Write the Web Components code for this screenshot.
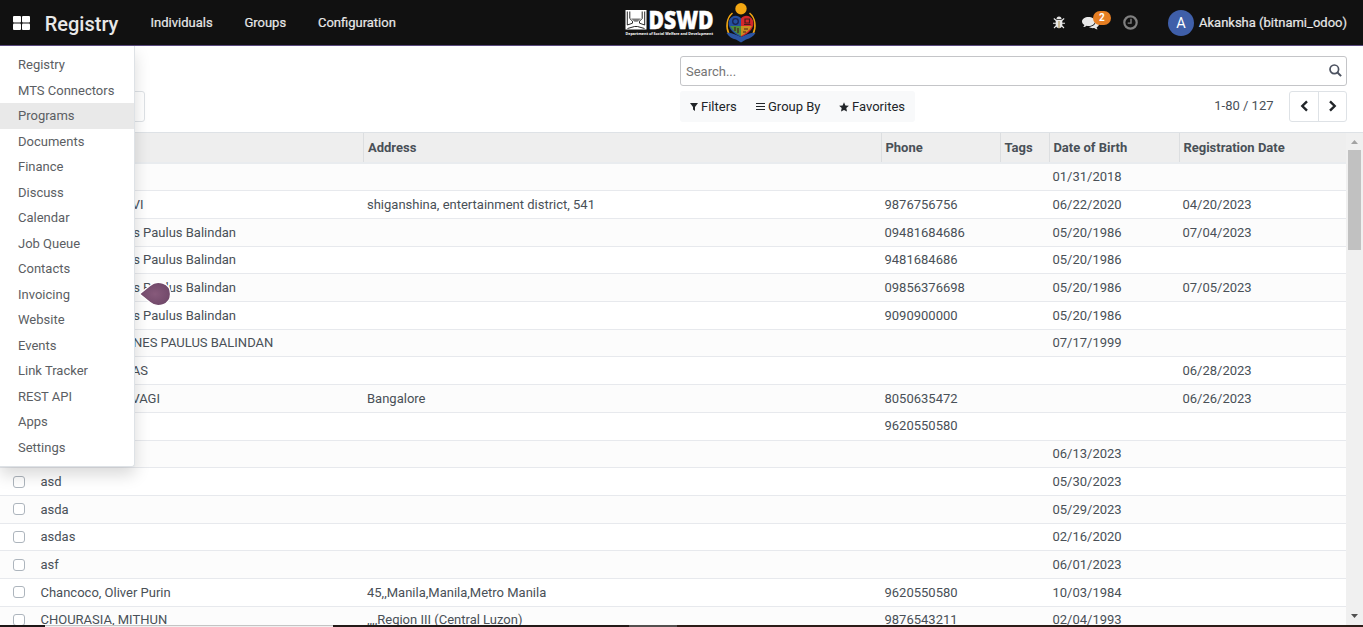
<!DOCTYPE html>
<html lang="en">
<head>
<meta charset="utf-8">
<title>Registry</title>
<style>
html,body{margin:0;height:100%;overflow:hidden;background:#fff}
body{font-family:Roboto,"Liberation Sans",sans-serif;font-size:13px;line-height:19.5px;color:#495057}
</style>
</head>
<body>
<registry-app></registry-app>
<script>
const define=(name,html,init)=>customElements.define(name,class extends HTMLElement{
  connectedCallback(){
    if(this.shadowRoot)return;
    const root=this.attachShadow({mode:"open"});
    const t=document.createElement("template");
    t.innerHTML=typeof html==="function"?html(this):html;
    root.append(t.content.cloneNode(true));
    if(init)init(this,root);
  }
});

define("dswd-logo",`
<style>
:host{display:flex;align-items:center}
svg{display:block}
</style>
<svg width="134" height="45" viewBox="0 0 134 45" aria-label="DSWD">
  <rect x="0.500" y="10" width="21" height="19.500" fill="#fff"/>
  <path d="M2.300 11.500v13.500l5.200-1.800v-2L4.800 18.500v-7M19.700 11.500v13.500l-5.200-1.800v-2l2.700-2.700v-7" fill="none" stroke="#111" stroke-width=".9"/>
  <path d="M6 18.500h10l-3.500 3.200h-3z" fill="#111" opacity=".55"/>
  <path d="M2.500 28.500l7-2h3l7 2" fill="none" stroke="#111" stroke-width=".9"/>
  <text x="23.500" y="28.500" textLength="65" lengthAdjust="spacingAndGlyphs" font-family="Open Sans" font-weight="800" font-size="24.500" fill="#fff" stroke="#fff" stroke-width=".5">DSWD</text>
  <text x="0.500" y="35" textLength="87.500" lengthAdjust="spacingAndGlyphs" font-family="Open Sans" font-weight="700" font-size="4" fill="#fff">Department of Social Welfare and Development</text>
  <g>
    <path d="M107.500 13c-6 5-7 14-3.500 21M124.500 13c6 5 7 14 3.500 21" fill="none" stroke="#f3a712" stroke-width="1.500"/>
    <path d="M116 37c-9-4-14-10-12-16.500 2-5.500 9-6.500 12-2z" fill="#244f9e"/>
    <path d="M116 37c9-4 14-10 12-16.500-2-5.500-9-6.500-12-2z" fill="#d3262b"/>
    <path d="M105 26H116v10c-5-3-9-6-11-10z" fill="#4b8b3b"/>
    <path d="M127 26H116v10c5-3 9-6 11-10z" fill="#c8901f"/>
    <circle cx="110.500" cy="21.500" r="2.800" fill="none" stroke="#1b2350" stroke-width="1.300"/>
    <path d="M119 24.500h6.500M120 23v-4h4.500v4zM110 27v4M113 28v5M119 29h4M118 32h3" fill="none" stroke="#4a1a1c" stroke-width="1.200"/>
    <path d="M101.500 33c5-1 9 2 14.500 4 5.500-2 9-5 14.500-4-2 3-5 5.500-9.500 6.500l-5 3-5-3c-4-.5-7-3-9.500-6.500z" fill="#2c55a3"/>
    <circle cx="116" cy="8.800" r="5.700" fill="#f3a712"/>
  </g>
</svg>`);

define("nav-link",`<style>:host{display:block;font-size:13px;color:#e8e8e8;-webkit-text-stroke:.2px #e8e8e8;white-space:nowrap}</style><slot></slot>`);

define("top-bar",`
<style>
:host{display:grid;grid-template-columns:625px 134px 1fr;height:45px;background:#111;border-bottom:1px solid #5a4a7e;color:#e8e8e8}
.left{display:flex;align-items:center}
.grid{width:17px;height:14px;margin-left:13px;margin-top:1px}
.brand{font-size:20px;font-weight:500;margin:3px 31.800px 0 14.700px;width:74px;white-space:nowrap;line-height:30px}
nav{display:flex;gap:31.800px}
.right{display:flex;align-items:center;justify-content:flex-end;padding-right:16px}
.msg{position:relative;width:18px;height:16px;margin:0 23px 0 17px}
.badge{position:absolute;left:11px;top:-4px;width:18px;height:14px;border-radius:7px;background:#e67e22;color:#fff;font-size:10px;line-height:14px;font-weight:700;text-align:center}
.avatar{width:26px;height:26px;border-radius:50%;background:#3f5fa9;color:#fff;font-size:14.500px;line-height:27px;text-align:center;margin:0 5px 0 30px}
svg{display:block;flex:none}
</style>
<div class="left">
  <svg class="grid" viewBox="0 0 17 14" fill="#fff"><rect width="8" height="6.500" rx="1"/><rect x="9" width="8" height="6.500" rx="1"/><rect y="7.500" width="8" height="6.500" rx="1"/><rect x="9" y="7.500" width="8" height="6.500" rx="1"/></svg>
  <span class="brand">Registry</span>
  <nav><nav-link>Individuals</nav-link><nav-link>Groups</nav-link><nav-link>Configuration</nav-link></nav>
</div>
<dswd-logo></dswd-logo>
<div class="right">
  <svg width="12" height="13" viewBox="0 0 12 13"><path d="M3.500 3a2.500 2.500 0 0 1 5 0z" fill="#e8e8e8"/><path d="M2.700 3.700h6.600v5c0 2-1.500 3.500-3.300 3.500s-3.300-1.500-3.300-3.500z" fill="#e8e8e8"/><path d="M.8 2.500l2.500 2M11.200 2.500l-2.500 2M0 7.300h12M1 12l2.500-2.500M11 12L8.500 9.500" stroke="#e8e8e8" stroke-width="1.100"/><path d="M6 5v7" stroke="#a98b4a" stroke-width="1"/></svg>
  <div class="msg"><svg width="17" height="15" viewBox="0 0 17 15" fill="#e8e8e8"><path d="M6.500 2C3 2 0 4 0 6.500 0 8 1 9.200 2.400 10c-.3.900-.8 1.500-1.300 2.100 1.500 0 2.600-.6 3.500-1.300.6.100 1.200.2 1.900.2 3.500 0 6.500-2 6.500-4.500S10 2 6.500 2z"/><path d="M14 5c.2 4-3 6.700-7 7 1.300 1 3.500 1.400 5.300 1 .8.700 2 1.300 3.400 1.300-.5-.6-.9-1.100-1.100-1.900C16 11.700 17 10.600 17 9c0-1.700-1.200-3.200-3-4z"/></svg><span class="badge">2</span></div>
  <svg width="15" height="15" viewBox="0 0 15 15" fill="none" stroke="#808080"><circle cx="7.500" cy="7.500" r="6.200" stroke-width="2.200"/><path d="M8 3.700v4.400H4.700" stroke-width="1.400"/></svg>
  <div class="avatar">A</div>
  <nav-link>Akanksha (bitnami_odoo)</nav-link>
</div>`);

define("search-box",`
<style>
:host{display:flex;align-items:center;justify-content:space-between;box-sizing:border-box;height:30px;border:1px solid #c4c5c8;border-radius:3px;padding:1px 4.500px 0 5px;color:#757575}
svg{display:block;margin-top:-3px}
</style><span><slot></slot></span>
<svg width="13" height="13" viewBox="0 0 13 13" fill="none" stroke="#4c5260"><circle cx="5.300" cy="5.300" r="4.300" stroke-width="1.700"/><path d="M8.500 8.500l3.600 3.600" stroke-width="2"/></svg>`);

define("control-panel",`
<style>
:host{display:flex;height:86px;border-bottom:1px solid #dee2e6;box-sizing:content-box}
.left{width:680px;box-sizing:border-box;padding-top:45px}
.export{box-sizing:border-box;width:60px;height:31px;margin-left:85px;border:1px solid #dee2e6;border-radius:3px}
.right{width:667px;padding-top:10px}
.tools{display:flex;justify-content:space-between;margin-top:5px}
.filters{display:flex;align-items:center;width:235px;height:31px;background:#f8f9fa;border-radius:3px;color:#212529;box-sizing:border-box;padding-left:10px}
.filters span{display:flex;align-items:center;white-space:nowrap}
.filters svg{margin-right:3px;margin-top:1px}
.f{width:66px}.g{width:83px}
.pager{display:flex;align-items:center}
.pager>span{margin:-1.500px 15.500px 0 0}
.btns{display:flex;box-sizing:border-box;width:58px;height:31px;border:1px solid #dee2e6;border-radius:3px}
.btns div{width:28px;box-sizing:border-box;display:grid;place-items:center}
.btns div+div{border-left:1px solid #dee2e6;padding-right:1px}
.btns svg{margin-top:-1px}
</style>
<div class="left"><div class="export"></div></div>
<div class="right">
  <search-box>Search...</search-box>
  <div class="tools">
    <div class="filters">
      <span class="f"><svg width="8" height="8" viewBox="0 0 8 8" fill="#212529"><path d="M0 0h8L5 4v4L3 6.500V4z"/></svg>Filters</span>
      <span class="g"><svg width="9" height="8" viewBox="0 0 9 8" fill="none" stroke="#212529"><path d="M0 .5h9M0 3.500h9M0 6.500h9"/></svg>Group By</span>
      <span><svg width="10" height="10" viewBox="0 0 10 10" fill="#212529"><path d="M5 .3l1.400 3.100 3.500.4-2.600 2.300.7 3.500L5 7.900 2 9.600l.7-3.500L.1 3.800l3.500-.4z"/></svg>Favorites</span>
    </div>
    <div class="pager"><span>1-80 / 127</span>
      <div class="btns">
        <div><svg width="9" height="12" viewBox="0 0 9 12"><path d="M7 1.300L2.300 6 7 10.700" fill="none" stroke="#212529" stroke-width="2.400"/></svg></div>
        <div><svg width="9" height="12" viewBox="0 0 9 12"><path d="M2 1.300L6.700 6 2 10.700" fill="none" stroke="#212529" stroke-width="2.400"/></svg></div>
      </div>
    </div>
  </div>
</div>`);

const cols="grid-template-columns:36px 327px 518px 119px 49px 130px 167px";

define("table-head",`
<style>
:host{display:grid;${cols};box-sizing:border-box;height:30.500px;background:#eee;border-bottom:2px solid #e9ecef;font-weight:700;color:#495057}
div{box-sizing:border-box;padding:5px 0 0 3.400px;white-space:nowrap}
.b{border-left:1px solid #dcdee0}
.a{padding-left:4px}
</style>
<div></div><div></div><div class="b a">Address</div><div class="b">Phone</div><div class="b">Tags</div><div class="b">Date of Birth</div><div class="b">Registration Date</div>`);

define("table-row",el=>{
  const [n,a="",p="",d="",r=""]=el.getAttribute("cells").split("|");
  const end=el.getAttribute("name-end");
  return `
<style>
:host{display:grid;${cols};box-sizing:border-box;height:27.710px;border-bottom:1px solid #e7e9ed}
:host([odd]){background:#fcfcfc}
div{padding:3.620px 0 0 3.500px;white-space:nowrap}
.n{padding-left:4.500px}
.ad{padding-left:4px}
.n.end{padding-left:0;width:${end?end-36:0}px;text-align:right}
i{display:block;box-sizing:border-box;width:12px;height:12px;border:1px solid #adb5bd;border-radius:3px;background:#fff;margin:3.800px 0 0 9px}
</style>
<div><i></i></div><div class="n ${end?"end":""}">${n}</div><div class="ad">${a}</div><div>${p}</div><div></div><div>${d}</div><div>${r}</div>`});

define("scroll-bar",`
<style>
:host{display:flex;flex-direction:column;justify-content:space-between;align-items:center;width:17px;background:#f0f0f0}
b{display:block;width:13px;height:100px;background:#c1c1c1;margin-top:17px}
.wrap{position:relative}
svg{display:block}
.up{position:absolute;left:3px;top:7px}
.down{margin-bottom:9px}
</style>
<div class="wrap"><svg class="up" width="7" height="4" viewBox="0 0 7 4"><path d="M0 4l3.500-4L7 4z" fill="#a3a3a3"/></svg><b></b></div>
<svg class="down" width="7" height="4" viewBox="0 0 7 4"><path d="M0 0l3.500 4L7 0z" fill="#505050"/></svg>`);

define("record-list",`
<style>:host{display:flex;height:494px;overflow:hidden}.table{width:1346px}</style>
<div class="table"><table-head></table-head></div><scroll-bar></scroll-bar>`,(el,root)=>{
  // [cells, right edge of a name whose start is under the apps menu]
  const rows=[["|||01/31/2018"],["VI|shiganshina, entertainment district, 541|9876756756|06/22/2020|04/20/2023",143.500],
  ["s Paulus Balindan||09481684686|05/20/1986|07/04/2023",236],["s Paulus Balindan||9481684686|05/20/1986",236],
  ["s Paulus Balindan||09856376698|05/20/1986|07/05/2023",236],["s Paulus Balindan||9090900000|05/20/1986",236],
  ["NES PAULUS BALINDAN|||07/17/1999",273.300],["AS||||06/28/2023",148],["VAGI|Bangalore|8050635472||06/26/2023",160],
  ["||9620550580"],["|||06/13/2023"],["asd|||05/30/2023"],["asda|||05/29/2023"],["asdas|||02/16/2020"],["asf|||06/01/2023"],
  ["Chancoco, Oliver Purin|45,,Manila,Manila,Metro Manila|9620550580|10/03/1984"],["CHOURASIA, MITHUN|,,,,Region III (Central Luzon)|9876543211|02/04/1993"]];
  rows.forEach(([c,end],i)=>{const r=document.createElement("table-row");r.setAttribute("cells",c);if(end)r.setAttribute("name-end",end);if(i%2===0)r.setAttribute("odd","");root.querySelector(".table").append(r)});
});

define("apps-menu",`
<style>
:host{display:block;position:absolute;left:0;top:46px;width:134px;padding:6px 0;background:#fff;border:1px solid #dee2e6;border-width:0 1px 1px 0;border-radius:0 0 3px 0;box-shadow:0 8px 16px rgba(0,0,0,.15);color:#5b5e63;clip-path:inset(0 -30px -30px 0)}
div{height:25.500px;line-height:25.500px;padding-left:18px;white-space:nowrap}
.on{background:#e9e9e9}
</style>`,(el,root)=>{
  "Registry,MTS Connectors,Programs,Documents,Finance,Discuss,Calendar,Job Queue,Contacts,Invoicing,Website,Events,Link Tracker,REST API,Apps,Settings".split(",").forEach(t=>{
    const d=document.createElement("div");d.textContent=t;if(t==="Programs")d.className="on";root.append(d)});
});

define("tour-tip",`
<style>:host{display:block;position:absolute;left:138px;top:280px}svg{display:block}</style>
<svg width="34" height="27" viewBox="0 0 34 27"><defs><radialGradient id="g"><stop offset="0" stop-color="#875a7b"/><stop offset="1" stop-color="#71496a"/></radialGradient></defs><path d="M1.500 14L12 5.500C19-.5 32.500 2.500 32.500 14S19 28.500 12 22.500z" fill="url(#g)" stroke="#fff" stroke-width="1.300"/></svg>`);

define("bottom-edge",`
<style>:host{display:flex;position:absolute;left:0;right:0;top:625px;height:2px}
.a{width:45px;background:#1d1616}.b{width:288px;background:linear-gradient(#c4c4c4 50%,#f0f0f0 50%)}.c{width:296px;background:#231a18}.d{width:48px;background:#54504f}.e{flex:1;background:#2c1d18}</style>
<div class="a"></div><div class="b"></div><div class="c"></div><div class="d"></div><div class="e"></div>`);

define("registry-app",`
<style>:host{display:block;position:relative;height:627px;overflow:hidden}</style>
<top-bar></top-bar><control-panel></control-panel><record-list></record-list><apps-menu></apps-menu><tour-tip></tour-tip><bottom-edge></bottom-edge>`);
</script>
</body>
</html>
